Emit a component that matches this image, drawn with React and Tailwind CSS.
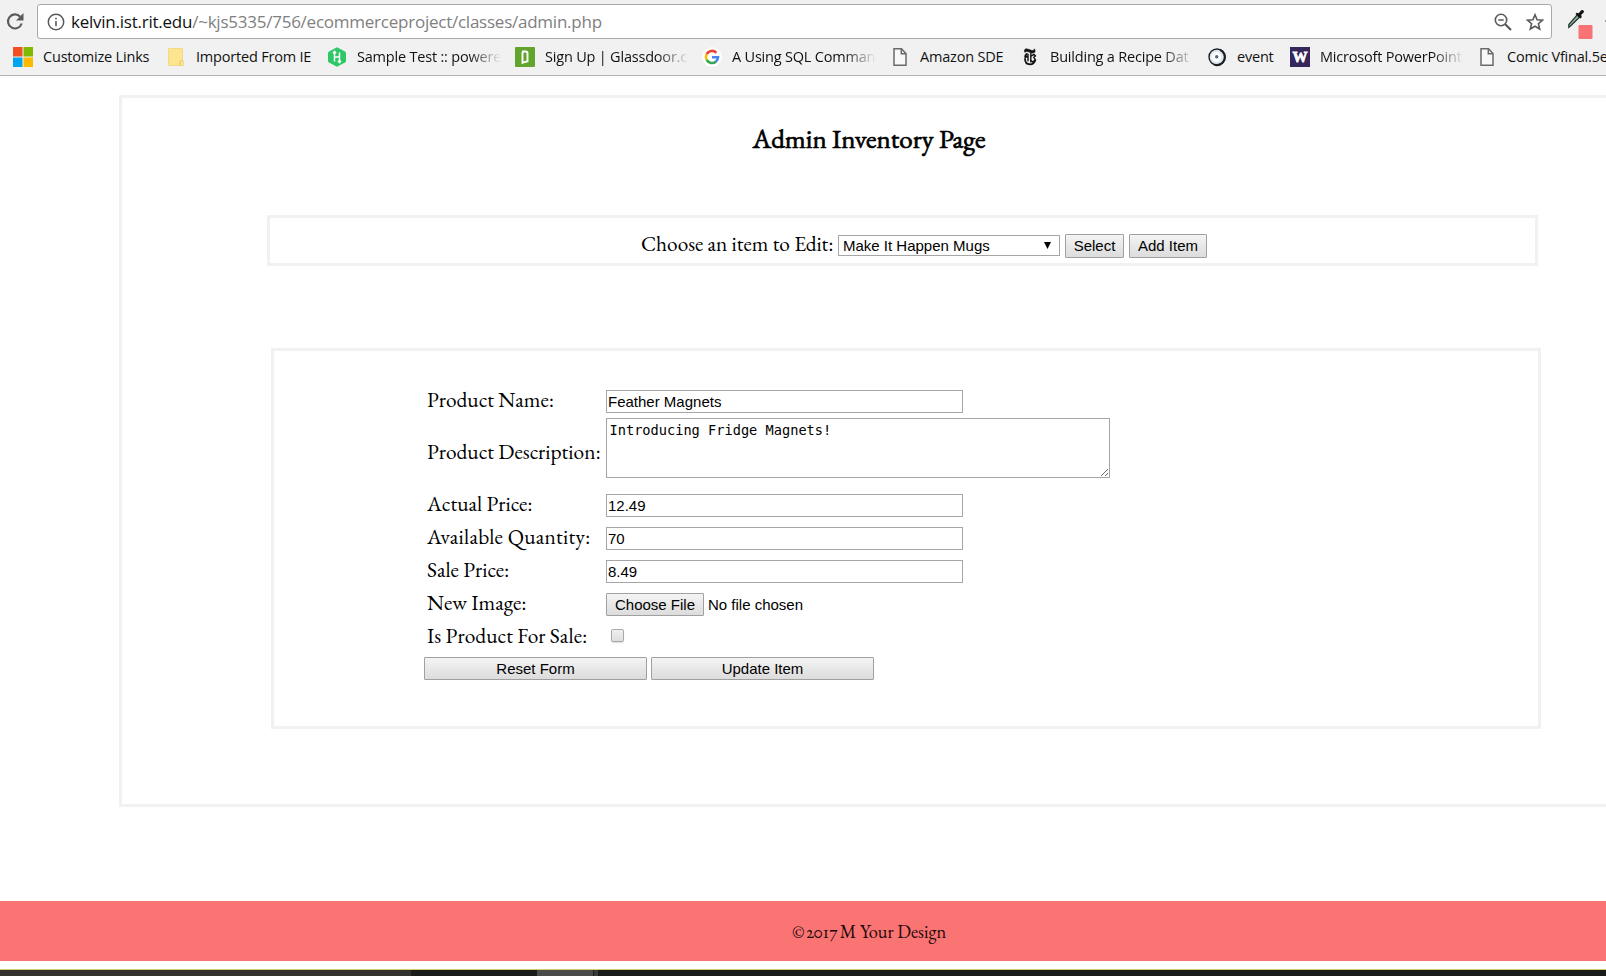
import React from "react";
import clsx from "clsx";

const bookmarks = [
  { label: "Customize Links", width: "w-[153px]", icon: <WindowsIcon /> },
  { label: "Imported From IE", width: "w-[161px]", icon: <FolderIcon /> },
  { label: "Sample Test :: powere", width: "w-[188px]", fade: true, icon: <HackerIcon /> },
  { label: "Sign Up | Glassdoor.c", width: "w-[187px]", fade: true, icon: <GlassdoorIcon /> },
  { label: "A Using SQL Comman", width: "w-[188px]", fade: true, icon: <GoogleIcon /> },
  { label: "Amazon SDE", width: "w-[130px]", icon: <PageIcon /> },
  { label: "Building a Recipe Dat", width: "w-[187px]", fade: true, icon: <TimesIcon /> },
  { label: "event", width: "w-[83px]", icon: <EventIcon /> },
  { label: "Microsoft PowerPoint", width: "w-[187px]", fade: true, icon: <UwIcon /> },
  { label: "Comic Vfinal.5e", width: "w-[187px]", icon: <PageIcon /> },
];

function WindowsIcon() {
  return (
    <svg width="20" height="20" viewBox="0 0 20 20">
      <path fill="#f25022" d="M0 0h9.5v9.5H0z" />
      <path fill="#7fba00" d="M10.5 0H20v9.5h-9.5z" />
      <path fill="#00a4ef" d="M0 10.5h9.5V20H0z" />
      <path fill="#ffb900" d="M10.5 10.5H20V20h-9.5z" />
    </svg>
  );
}

function FolderIcon() {
  return (
    <svg width="20" height="20" viewBox="0 0 20 20">
      <path d="M2.5 1.5h14v12.5h1v4.500h-15z" fill="#fde48f" stroke="#f0d98a" />
      <path d="M14 18.300v-3.600q0-1 1-1h1.500" fill="none" stroke="#e8c55c" />
    </svg>
  );
}

function HackerIcon() {
  return (
    <svg width="20" height="20" viewBox="0 0 20 20">
      <path d="M10 .3l8 4.2q1 .6 1 1.6v7.8q0 1-1 1.6l-8 4.2-8-4.2q-1-.6-1-1.6V6.100q0-1 1-1.600z" fill="#2ec866" />
      <path d="M7.500 5v9.500M12.500 5.500V15M7.500 10h5M6 6.300l1.500-1.800L9 6.300M11 13.700l1.500 1.800 1.500-1.800" fill="none" stroke="#fff" strokeWidth="1.500" />
    </svg>
  );
}

function GlassdoorIcon() {
  return (
    <svg width="20" height="20" viewBox="0 0 20 20">
      <rect width="20" height="20" rx="1" fill="#62a52c" />
      <path d="M7.500 5v10.800l5-1.600V6.200q0-1.700-1.700-1.700H7" fill="none" stroke="#fff" strokeWidth="1.900" />
    </svg>
  );
}

function GoogleIcon() {
  return (
    <svg width="20" height="20" viewBox="0 0 20 20">
      <circle cx="10" cy="10" r="9.800" fill="#fff" />
      <g fill="none" strokeWidth="2.600">
        <path d="M14.400 5.800A6 6 0 0 0 4.700 7.200" stroke="#ea4335" />
        <path d="M4.700 7.200a6 6 0 0 0 0 5.600" stroke="#fbbc05" />
        <path d="M4.700 12.800a6 6 0 0 0 9.300 1.700" stroke="#34a853" />
        <path d="M14 14.500a6 6 0 0 0 2-4.200h-6" stroke="#4285f4" />
      </g>
    </svg>
  );
}

function PageIcon() {
  return (
    <svg width="20" height="20" viewBox="0 0 20 20">
      <path d="M4 1.800h7.500l4.500 4.700v11.700H4zM11.300 2v4.700H16" fill="#f8f8f8" stroke="#6a6a6a" strokeWidth="1.500" />
    </svg>
  );
}

function TimesIcon() {
  return (
    <svg width="20" height="20" viewBox="0 0 20 20" fill="none" stroke="#111">
      <path d="M5 5.500C3.500 3.500 4.800 1.500 7.200 1.900c2 .3 4.200 1.800 5.800 1.500.9-.2 1.200-.8 1-1.600 1.800 1.300 1.500 4-1 4.300-2.300.2-4.500-1.800-6.300-1.700-.9 0-1.400.4-1.700 1.100z" fill="#111" strokeWidth=".5" />
      <path d="M7.500 6.500Q4.800 8 5.300 10.200 6.500 9.300 7.800 9.800M5 11.500c0 3.700 2.200 5.800 5 5.800 2.600 0 4.600-1.600 5.300-4.300" strokeWidth="1.800" />
      <path d="M8 6.800v7.500M10.800 6v9.500" strokeWidth="1.400" />
      <path d="M11 9.200l3-1.700 1.400 1.500-1.600 1.300 1.600 2.500-2.600 2.200-1.800-1.600" strokeWidth="1.400" />
    </svg>
  );
}

function EventIcon() {
  return (
    <svg width="20" height="20" viewBox="0 0 20 20">
      <circle cx="10" cy="10" r="8" fill="#dfe6ee" stroke="#1d2127" strokeWidth="1.400" />
      <path d="M13 2.700a8 8 0 0 1-5.500 15" fill="none" stroke="#1d2127" strokeWidth="2.200" />
      <circle cx="9.300" cy="10" r="5" fill="#fff" />
      <circle cx="9.700" cy="9.800" r="1.700" fill="#4f6880" />
    </svg>
  );
}

function UwIcon() {
  return (
    <span className="flex h-5 w-5 items-center justify-center bg-[#35265b] font-['Liberation_Serif',serif] text-[15px] leading-none font-black text-white [-webkit-text-stroke:0.8px_white]">
      W
    </span>
  );
}

function Bookmark({ label, width, icon, fade }) {
  return (
    <div className={clsx("flex h-5 shrink-0 items-center", width)}>
      <span className="h-5 w-5 shrink-0">{icon}</span>
      <span
        className={clsx(
          "ml-[10px] text-[14.5px] leading-5 tracking-[-0.2px] whitespace-nowrap",
          fade && "w-[146px] shrink-0 [mask-image:linear-gradient(to_right,black_112px,transparent_144px)]"
        )}
      >
        {label}
      </span>
    </div>
  );
}

function BrowserBar() {
  return (
    <header className="h-[76px] overflow-hidden border-b border-[#b2b2b2] bg-[#f1f1f1] pt-1 font-['Open_Sans',sans-serif] text-[#111]">
      <div className="flex h-[35px] items-center">
        <svg className="ml-[5px] shrink-0" width="20" height="20" viewBox="0 0 20 20">
          <path d="M15.200 4.700A7 7 0 1 0 16.700 11.500" fill="none" stroke="#5a5a5a" strokeWidth="2.100" />
          <path d="M18.500 1v7.500H11z" fill="#5a5a5a" />
        </svg>
        <div className="ml-3 flex h-[35px] w-[1515px] shrink-0 items-center rounded-[3px] border border-[#a9a9a9] bg-white">
          <svg className="ml-[9px] shrink-0" width="18" height="18" viewBox="0 0 18 18">
            <circle cx="9" cy="9" r="7.700" fill="none" stroke="#5a5a5a" strokeWidth="1.500" />
            <path d="M8.200 4.800h1.600v1.700H8.200zM8.200 8h1.600v5.200H8.200z" fill="#5a5a5a" />
          </svg>
          <div className="ml-[6px] flex-1 text-[17px] tracking-[-0.24px] whitespace-nowrap text-[#808080]">
            <span className="text-[#111]">kelvin.ist.rit.edu</span>
            /~kjs5335/756/ecommerceproject/classes/admin.php
          </div>
          <svg className="mr-[14px] shrink-0" width="18" height="18" viewBox="0 0 18 18" fill="none" stroke="#5a5a5a">
            <circle cx="7" cy="7" r="5.700" strokeWidth="1.600" />
            <path d="M4.300 7h5.400" strokeWidth="1.500" />
            <path d="M11 11l6 6" strokeWidth="2.200" />
          </svg>
          <svg className="mr-[7px] shrink-0" width="18" height="18" viewBox="0 0 18 18">
            <path d="M9 1.800l2.100 5 5.400.4-4.100 3.500 1.300 5.300L9 13.200 4.300 16l1.300-5.300-4.100-3.500 5.400-.4z" fill="none" stroke="#5a5a5a" strokeWidth="1.600" />
          </svg>
        </div>
        <svg className="ml-[15px] shrink-0" width="39" height="34" viewBox="0 0 39 34">
          <path d="M1.800 22.500v-3l8.200-9.500 2.500 2.300-8.500 8.200z" fill="#8fae9c" stroke="#22382e" strokeWidth="1.200" />
          <path d="M8.500 9l1.200-1.200 2 .4 2.500-3q2.300-1 2.800 1.300 0 1.500-2.800 3.300l.5 2.500-1.300 1.200z" fill="#111" />
          <rect x="11.500" y="20" width="14" height="14" rx="1" fill="#fb7474" />
          <path d="M38 15h1v2h-1z" fill="#999" />
        </svg>
      </div>
      <nav className="mt-2 flex h-5 pl-[13px]">
        {bookmarks.map((b) => (
          <Bookmark key={b.label} {...b} />
        ))}
      </nav>
    </header>
  );
}

function Button({ className, children }) {
  return (
    <button
      type="button"
      className={clsx(
        "shrink-0 rounded-[1px] border border-[#a0a0a0] bg-gradient-to-b from-[#f4f4f4] to-[#dcdcdc] font-['Liberation_Sans',sans-serif] text-[15px] leading-[21px] text-black",
        className
      )}
    >
      {children}
    </button>
  );
}

function Row({ label, className, labelClass, children }) {
  return (
    <div className={clsx("flex pl-[3px]", className)}>
      <label className={clsx("-mt-[2px] w-[179px] shrink-0 text-[21.4px] leading-[23px] whitespace-nowrap", labelClass)}>{label}</label>
      {children}
    </div>
  );
}

function TextInput({ value }) {
  return (
    <input
      defaultValue={value}
      className="h-[23px] w-[357px] border border-[#a6a6a6] bg-white px-px font-['Liberation_Sans',sans-serif] text-[15px]"
    />
  );
}

export default function App() {
  return (
    <div className="h-[976px] w-[1606px] overflow-hidden bg-white font-['EB_Garamond','Liberation_Serif',serif] text-black">
      <BrowserBar />
      <main className="mt-[19px] ml-[119px] h-[712px] w-[1500px] border-[3px] border-[#f1f1f1]">
        <h1 className="h-[117px] pt-[23px] text-center text-[27px] leading-[36px] font-normal [-webkit-text-stroke:0.7px_black]">
          Admin Inventory Page
        </h1>
        <section className="ml-[145px] flex h-[51px] w-[1271px] items-start border-[3px] border-[#f1f1f1] pt-4 pl-[371px]">
          <span className="-mt-px w-[197px] shrink-0 text-[21.3px] leading-[22px] whitespace-nowrap">Choose an item to Edit:</span>
          <div className="relative mt-px w-[222px] shrink-0">
            <select className="block h-[21px] w-full appearance-none border border-[#a6a6a6] bg-white pl-1 font-['Liberation_Sans',sans-serif] text-[15px] leading-[19px]">
              <option>Make It Happen Mugs</option>
            </select>
            <svg className="pointer-events-none absolute top-[7px] right-[9px]" width="7" height="7" viewBox="0 0 7 7">
              <path d="M0 0h7L3.500 7z" fill="#000" />
            </svg>
          </div>
          <Button className="ml-[5px] h-6 w-[59px] pb-px">Select</Button>
          <Button className="ml-[5px] h-6 w-[78px] pb-px">Add Item</Button>
        </section>
        <section className="mt-[82px] ml-[149px] h-[381px] w-[1270px] border-[3px] border-[#f1f1f1] pt-[39px] pl-[150px]">
          <Row label="Product Name:" className="h-[23px]">
            <TextInput value="Feather Magnets" />
          </Row>
          <Row label="Product Description:" className="mt-[5px] h-[60px]" labelClass="pt-[24px]">
            <textarea
              defaultValue="Introducing Fridge Magnets!"
              className="h-[60px] w-[504px] resize border border-[#a6a6a6] bg-white px-[2.5px] pt-[2px] font-['DejaVu_Sans_Mono',monospace] text-[13.65px] leading-[18px]"
            />
          </Row>
          <Row label="Actual Price:" className="mt-4 h-[23px]">
            <TextInput value="12.49" />
          </Row>
          <Row label="Available Quantity:" className="mt-[10px] h-[23px]" labelClass="tracking-[0.24px]">
            <TextInput value="70" />
          </Row>
          <Row label="Sale Price:" className="mt-[10px] h-[23px]">
            <TextInput value="8.49" />
          </Row>
          <Row label="New Image:" className="mt-[10px] h-[23px]">
            <Button className="h-[23px] w-[98px]">Choose File</Button>
            <span className="ml-1 font-['Liberation_Sans',sans-serif] text-[15px] leading-[24px]">No file chosen</span>
          </Row>
          <Row label="Is Product For Sale:" className="mt-[10px] h-[23px]" labelClass="tracking-[0.05px]">
            <input
              type="checkbox"
              className="mt-[3px] ml-[5px] h-[13px] w-[13px] appearance-none rounded-[2px] border border-[#a8a8a8] bg-gradient-to-b from-[#f0f0f0] to-[#dedede] shadow-[0_1px_1px_#ddd]"
            />
          </Row>
          <div className="mt-[8px] flex gap-1">
            <Button className="h-[23px] w-[223px]">Reset Form</Button>
            <Button className="h-[23px] w-[223px]">Update Item</Button>
          </div>
        </section>
      </main>
      <footer className="mt-[94px] h-[60px] bg-[#fb7474] pt-[19px] pl-[132px] text-center text-[18.3px] leading-6 oldstyle-nums text-[#1c0808]">
        <span className="tracking-[-0.95px]">© 2017 </span>M Your Design
      </footer>
      <div className="mt-2 flex h-[7px] border-t border-[#d8cc6a] bg-[#191c1b]">
        <span className="w-[411px] bg-[#33312e]" />
        <span className="ml-[126px] w-[56px] bg-[#4a4a4a]" />
        <span className="ml-px w-[4px] bg-[#3a3a3a]" />
      </div>
    </div>
  );
}
